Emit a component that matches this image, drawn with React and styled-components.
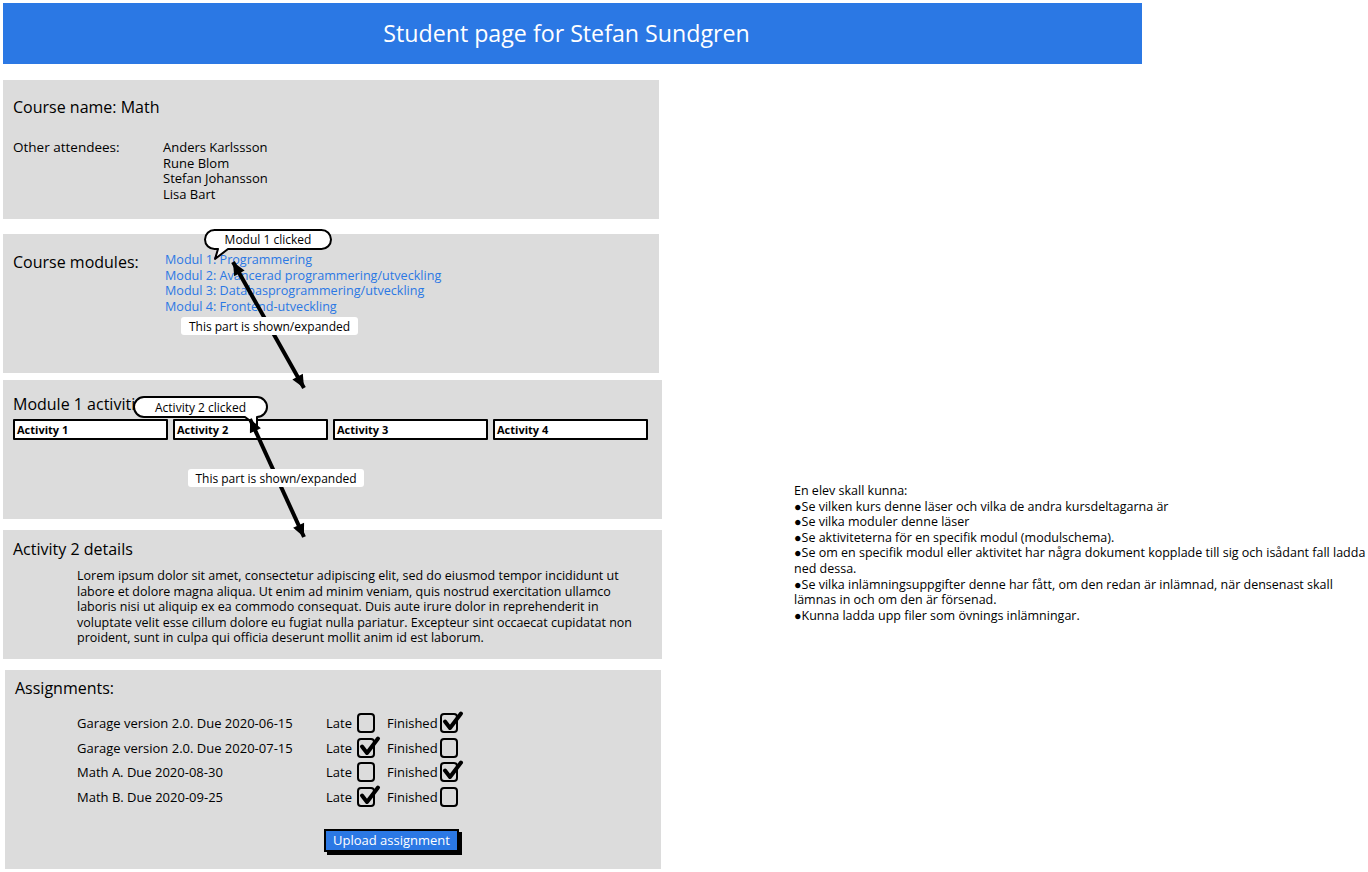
import React from "react";
import styled, { createGlobalStyle } from "styled-components";

const Global = createGlobalStyle`
  html, body { margin: 0; padding: 0; background: #fff; }
  body { font-family: "Open Sans", "Liberation Sans", sans-serif; color: #000; }
  * { box-sizing: border-box; }
`;

const BLUE = "#2b78e4";
const GRAY = "#dcdcdc";

const Page = styled.div`
  position: relative;
  width: 1368px;
  height: 872px;
  overflow: hidden;
`;

const Header = styled.header`
  margin: 3px 0 0 3px;
  width: 1139px;
  height: 61px;
  background: ${BLUE};
  display: flex;
  align-items: center;
  justify-content: center;
  color: #fff;
  font-size: 23.2px;
  padding: 0 12px 2px 0;
`;

const Body = styled.div`
  display: flex;
  align-items: flex-start;
`;

const LeftColumn = styled.div`
  display: flex;
  flex-direction: column;
  margin-left: 3px;
  width: 659px;
`;

const Panel = styled.section`
  background: ${GRAY};
  width: ${(p) => p.$w || 659}px;
  height: ${(p) => p.$h}px;
  margin-top: ${(p) => p.$mt}px;
  margin-left: ${(p) => p.$ml || 0}px;
  padding: ${(p) => p.$pt}px 10px 0 10px;
`;

const Heading = styled.h2`
  margin: 0;
  font-size: 16px;
  font-weight: 400;
  line-height: 20px;
  white-space: nowrap;
`;

const AttendeeRow = styled.div`
  display: flex;
  margin-top: 23px;
  font-size: 13px;
  line-height: 15.6px;
`;

const AttendeeLabel = styled.div`
  width: 150px;
  font-size: 13.5px;
`;

const List = styled.ul`
  list-style: none;
  margin: 0;
  padding: 0;
  font-size: ${(p) => p.$fs || 13}px;
  line-height: 15.6px;
`;

const ModuleRow = styled.div`
  display: flex;
  align-items: flex-start;
`;

const ModuleHeading = styled(Heading)`
  width: 152px;
`;

const ModuleLink = styled.li`
  color: ${BLUE};
`;

const ActivityRow = styled.div`
  display: grid;
  grid-template-columns: repeat(4, 155px);
  column-gap: 5px;
  margin-top: 5px;
`;

const ActivityBox = styled.div`
  height: 21px;
  background: #fff;
  border: 2px solid #000;
  border-radius: 1px;
  font-size: 11px;
  font-weight: 700;
  display: flex;
  align-items: center;
  padding-left: 2px;
`;

const Paragraph = styled.p`
  margin: 9px 0 0 64px;
  font-size: 12.5px;
  line-height: 15.5px;
  white-space: nowrap;
`;

const AssignmentList = styled.div`
  display: flex;
  flex-direction: column;
  margin-top: 13px;
  margin-left: 62px;
`;

const AssignmentRow = styled.div`
  display: flex;
  align-items: center;
  height: 24.6px;
  font-size: 13px;
`;

const AssignmentName = styled.span`
  width: 249px;
`;

const CheckLabel = styled.span`
  margin-right: ${(p) => p.$mr}px;
`;

const Box = styled.span`
  position: relative;
  display: inline-block;
  width: 18px;
  height: 20px;
  border: 2px solid #000;
  border-radius: 4px;
  margin-right: 12px;
`;

const Tick = styled.svg`
  position: absolute;
  left: 1px;
  top: -4px;
  overflow: visible;
`;

const ButtonRow = styled.div`
  margin: 19px 0 0 309px;
`;

const UploadButton = styled.button`
  width: 135px;
  height: 23px;
  background: ${BLUE};
  color: #fff;
  font-family: inherit;
  font-size: 13px;
  border: 2px solid #000;
  box-shadow: 3px 3px 0 #000;
  padding: 0;
`;

const Notes = styled.div`
  margin-left: 132px;
  padding-top: 419px;
  font-size: 12.5px;
  line-height: 15.6px;
  white-space: nowrap;
`;

/* overlays */
const Overlay = styled.svg`
  position: absolute;
  left: 0;
  top: 0;
  pointer-events: none;
`;

const Bubble = styled.div`
  position: absolute;
  left: ${(p) => p.$x}px;
  top: ${(p) => p.$y}px;
  width: ${(p) => p.$w}px;
  height: ${(p) => p.$h}px;
  display: flex;
  align-items: center;
  justify-content: center;
  font-size: 12px;
`;

const BubbleText = styled.span`
  position: relative;
`;

const BubbleShape = styled.svg`
  position: absolute;
  left: 0;
  top: 0;
  overflow: visible;
`;

const Label = styled.div`
  position: absolute;
  left: ${(p) => p.$x}px;
  top: ${(p) => p.$y}px;
  width: ${(p) => p.$w}px;
  height: 18px;
  background: #fff;
  border-radius: 3px;
  font-size: 12px;
  display: flex;
  align-items: center;
  justify-content: center;
`;

function Check({ checked }) {
  return (
    <Box>
      {checked && (
        <Tick width="20" height="20" viewBox="0 0 20 20">
          <path d="M2 10.5 L7 17 L18 2.5" fill="none" stroke="#000" strokeWidth="4" strokeLinecap="round" strokeLinejoin="round" />
        </Tick>
      )}
    </Box>
  );
}

function SpeechBubble({ x, y, w, h, tail, children }) {
  const r = h / 2;
  const [tx0, tx1, ex, ey] = tail;
  const d = `M${r} 1 H${w - r} A${r - 1} ${r - 1} 0 0 1 ${w - r} ${h - 1} H${tx1} L${ex} ${ey} L${tx0} ${h - 1} H${r} A${r - 1} ${r - 1} 0 0 1 ${r} 1 Z`;
  return (
    <Bubble $x={x} $y={y} $w={w} $h={h}>
      <BubbleShape width={w} height={h}>
        <path d={d} fill="#fff" stroke="#000" strokeWidth="2" strokeLinejoin="round" />
      </BubbleShape>
      <BubbleText>{children}</BubbleText>
    </Bubble>
  );
}

function Arrow({ x1, y1, x2, y2 }) {
  const a = Math.atan2(y2 - y1, x2 - x1);
  const L = 13, W = 6;
  const head = (x, y, ang) => {
    const bx = x - L * Math.cos(ang), by = y - L * Math.sin(ang);
    const px = -Math.sin(ang) * W, py = Math.cos(ang) * W;
    return `${x},${y} ${bx + px},${by + py} ${bx - px},${by - py}`;
  };
  return (
    <g>
      <line x1={x1} y1={y1} x2={x2} y2={y2} stroke="#000" strokeWidth="4" />
      <polygon points={head(x2, y2, a)} fill="#000" />
      <polygon points={head(x1, y1, a + Math.PI)} fill="#000" />
    </g>
  );
}

const attendees = ["Anders Karlssson", "Rune Blom", "Stefan Johansson", "Lisa Bart"];
const modules = [
  "Modul 1: Programmering",
  "Modul 2: Avancerad programmering/utveckling",
  "Modul 3: Databasprogrammering/utveckling",
  "Modul 4: Frontend-utveckling",
];
const assignments = [
  { name: "Garage version 2.0. Due 2020-06-15", late: false, done: true },
  { name: "Garage version 2.0. Due 2020-07-15", late: true, done: false },
  { name: "Math A. Due 2020-08-30", late: false, done: true },
  { name: "Math B. Due 2020-09-25", late: true, done: false },
];

export default function App() {
  return (
    <Page>
      <Global />
      <Header>Student page for Stefan Sundgren</Header>
      <Body>
        <LeftColumn>
          <Panel $mt={16} $h={139} $w={656} $pt={17}>
            <Heading>Course name: Math</Heading>
            <AttendeeRow>
              <AttendeeLabel>Other attendees:</AttendeeLabel>
              <List>
                {attendees.map((a) => (
                  <li key={a}>{a}</li>
                ))}
              </List>
            </AttendeeRow>
          </Panel>
          <Panel $mt={15} $h={139} $w={656} $pt={18}>
            <ModuleRow>
              <ModuleHeading>Course modules:</ModuleHeading>
              <List $fs={12.6}>
                {modules.map((m) => (
                  <ModuleLink key={m}>{m}</ModuleLink>
                ))}
              </List>
            </ModuleRow>
          </Panel>
          <Panel $mt={7} $h={139} $pt={14}>
            <Heading>Module 1 activities</Heading>
            <ActivityRow>
              {[1, 2, 3, 4].map((n) => (
                <ActivityBox key={n}>Activity {n}</ActivityBox>
              ))}
            </ActivityRow>
          </Panel>
          <Panel $mt={11} $h={129} $pt={9}>
            <Heading>Activity 2 details</Heading>
            <Paragraph>
              Lorem ipsum dolor sit amet, consectetur adipiscing elit, sed do eiusmod tempor incididunt ut
              <br />
              labore et dolore magna aliqua. Ut enim ad minim veniam, quis nostrud exercitation ullamco
              <br />
              laboris nisi ut aliquip ex ea commodo consequat. Duis aute irure dolor in reprehenderit in
              <br />
              voluptate velit esse cillum dolore eu fugiat nulla pariatur. Excepteur sint occaecat cupidatat non
              <br />
              proident, sunt in culpa qui officia deserunt mollit anim id est laborum.
            </Paragraph>
          </Panel>
          <Panel $mt={11} $h={199} $w={656} $ml={2} $pt={8}>
            <Heading>Assignments:</Heading>
            <AssignmentList>
              {assignments.map((a) => (
                <AssignmentRow key={a.name}>
                  <AssignmentName>{a.name}</AssignmentName>
                  <CheckLabel $mr={5}>Late</CheckLabel>
                  <Check checked={a.late} />
                  <CheckLabel $mr={2}>Finished</CheckLabel>
                  <Check checked={a.done} />
                </AssignmentRow>
              ))}
            </AssignmentList>
            <ButtonRow>
              <UploadButton>Upload assignment</UploadButton>
            </ButtonRow>
          </Panel>
        </LeftColumn>
        <Notes>
          En elev skall kunna:
          <br />●Se vilken kurs denne läser och vilka de andra kursdeltagarna är
          <br />●Se vilka moduler denne läser
          <br />●Se aktiviteterna för en specifik modul (modulschema).
          <br />●Se om en specifik modul eller aktivitet har några dokument kopplade till sig och isådant fall ladda
          <br />ned dessa.
          <br />●Se vilka inlämningsuppgifter denne har fått, om den redan är inlämnad, när densenast skall
          <br />lämnas in och om den är försenad.
          <br />●Kunna ladda upp filer som övnings inlämningar.
        </Notes>
      </Body>

      <SpeechBubble x={204} y={229} w={128} h={21} tail={[14, 24, 11, 30]}>
        Modul 1 clicked
      </SpeechBubble>
      <SpeechBubble x={133} y={396} w={135} h={22} tail={[112, 124, 124, 30]}>
        Activity 2 clicked
      </SpeechBubble>

      <Overlay width="1368" height="872">
        <Arrow x1={233} y1={262} x2={304} y2={388} />
        <Arrow x1={250} y1={419} x2={304} y2={537} />
      </Overlay>

      <Label $x={181} $y={317} $w={177}>This part is shown/expanded</Label>
      <Label $x={188} $y={469} $w={176}>This part is shown/expanded</Label>
    </Page>
  );
}
